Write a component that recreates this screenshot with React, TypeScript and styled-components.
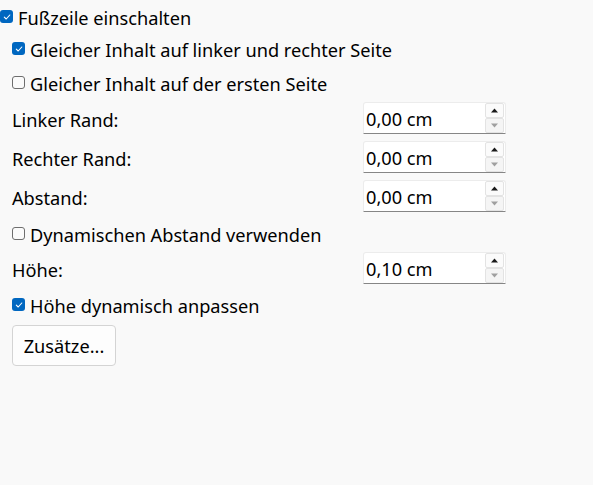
import React, { FC } from 'react';
import styled, { createGlobalStyle } from 'styled-components';

const GlobalStyle = createGlobalStyle`
  html, body {
    margin: 0;
    padding: 0;
    background: #f9f9f9;
  }
  body {
    font-family: "Noto Sans", "Open Sans", sans-serif;
    color: #000;
  }
`

const PageStyle = styled.div`
  width: 593px;
  height: 485px;
  background: #f9f9f9;
  display: flex;
  flex-direction: column;
  font-size: 18.2px;
`

const RowStyle = styled.div<{ $top: number, $indent: number }>`
  display: flex;
  align-items: center;
  height: 32px;
  margin-top: ${p => p.$top}px;
  padding-left: ${p => p.$indent}px;
`

const CheckBoxStyle = styled.span<{ $checked: boolean }>`
  width: 13px;
  height: 13px;
  box-sizing: border-box;
  border-radius: 3px;
  margin-right: 5px;
  margin-top: -3px;
  display: flex;
  align-items: center;
  justify-content: center;
  background: ${p => p.$checked ? '#0067c0' : '#fbfbfb'};
  border: ${p => p.$checked ? 'none' : '1px solid #6e6e6e'};
  flex-shrink: 0;
`

const LabelStyle = styled.span`
  white-space: nowrap;
  line-height: 1;
`

const SpinRowStyle = styled.div<{ $top: number }>`
  display: grid;
  grid-template-columns: 351px 143px;
  align-items: center;
  height: 32px;
  margin-top: ${p => p.$top}px;
  padding-left: 12px;

  & > span {
    margin-top: 5px;
  }
`

const SpinBoxStyle = styled.div`
  height: 32px;
  box-sizing: border-box;
  background: #fff;
  border: 1px solid #ececec;
  border-bottom: 1px solid #868686;
  border-radius: 3px 3px 0 0;
  display: flex;
  align-items: center;
  justify-content: space-between;
  padding-left: 2px;
  padding-right: 1px;

  & > span {
    margin-top: 2px;
  }
`

const SpinButtonsStyle = styled.div`
  display: flex;
  flex-direction: column;
  align-self: flex-start;
  width: 19px;
`

const SpinButtonStyle = styled.div<{ $disabled: boolean }>`
  height: 15px;
  box-sizing: border-box;
  background: ${p => p.$disabled ? '#f5f5f5' : '#fbfbfb'};
  border: 1px solid #e3e3e3;
  border-radius: 2px;
  display: flex;
  align-items: center;
  justify-content: center;
  color: ${p => p.$disabled ? '#a0a0a0' : '#1a1a1a'};
`

const ButtonStyle = styled.button`
  width: 104px;
  height: 41px;
  margin-top: 3px;
  margin-left: 12px;
  background: #fdfdfd;
  border: 1px solid #d4d4d4;
  border-radius: 4px;
  font-family: inherit;
  font-size: 18.2px;
  color: #000;
  padding: 0;
  padding-top: 1px;
`

interface CheckProps {
  checked: boolean
  text: string
  top: number
  indent: number
}

const CheckRow: FC<CheckProps> = ({ checked, text, top, indent }) => {
  return <RowStyle $top={top} $indent={indent}>
    <CheckBoxStyle $checked={checked}>
      {checked && <svg width="8" height="8" viewBox="0 0 8 8">
        <path d="M1.3 4.2 L3.2 6 L6.8 2" fill="none" stroke="#fff" strokeWidth="1.1" strokeLinecap="round" strokeLinejoin="round" />
      </svg>}
    </CheckBoxStyle>
    <LabelStyle>{text}</LabelStyle>
  </RowStyle>
}

interface SpinProps {
  label: string
  value: string
  top: number
}

const SpinRow: FC<SpinProps> = ({ label, value, top }) => {
  return <SpinRowStyle $top={top}>
    <LabelStyle>{label}</LabelStyle>
    <SpinBoxStyle>
      <LabelStyle>{value}</LabelStyle>
      <SpinButtonsStyle>
        <SpinButtonStyle $disabled={false}>
          <svg width="7" height="5" viewBox="0 0 7 5"><path d="M0 4.5 L3.5 0.5 L7 4.5 Z" fill="currentColor" /></svg>
        </SpinButtonStyle>
        <SpinButtonStyle $disabled={true}>
          <svg width="7" height="5" viewBox="0 0 7 5"><path d="M0 0.5 L3.5 4.5 L7 0.5 Z" fill="currentColor" /></svg>
        </SpinButtonStyle>
      </SpinButtonsStyle>
    </SpinBoxStyle>
  </SpinRowStyle>
}

const App: FC = () => {
  return <>
    <GlobalStyle />
    <PageStyle>
      <CheckRow checked={true} text="Fußzeile einschalten" top={2} indent={0} />
      <CheckRow checked={true} text="Gleicher Inhalt auf linker und rechter Seite" top={0} indent={12} />
      <CheckRow checked={false} text="Gleicher Inhalt auf der ersten Seite" top={2} indent={12} />
      <SpinRow label="Linker Rand:" value="0,00 cm" top={2} />
      <SpinRow label="Rechter Rand:" value="0,00 cm" top={7} />
      <SpinRow label="Abstand:" value="0,00 cm" top={7} />
      <CheckRow checked={false} text="Dynamischen Abstand verwenden" top={7} indent={12} />
      <SpinRow label="Höhe:" value="0,10 cm" top={1} />
      <CheckRow checked={true} text="Höhe dynamisch anpassen" top={6} indent={12} />
      <ButtonStyle>Zusätze...</ButtonStyle>
    </PageStyle>
  </>
}

export default App
